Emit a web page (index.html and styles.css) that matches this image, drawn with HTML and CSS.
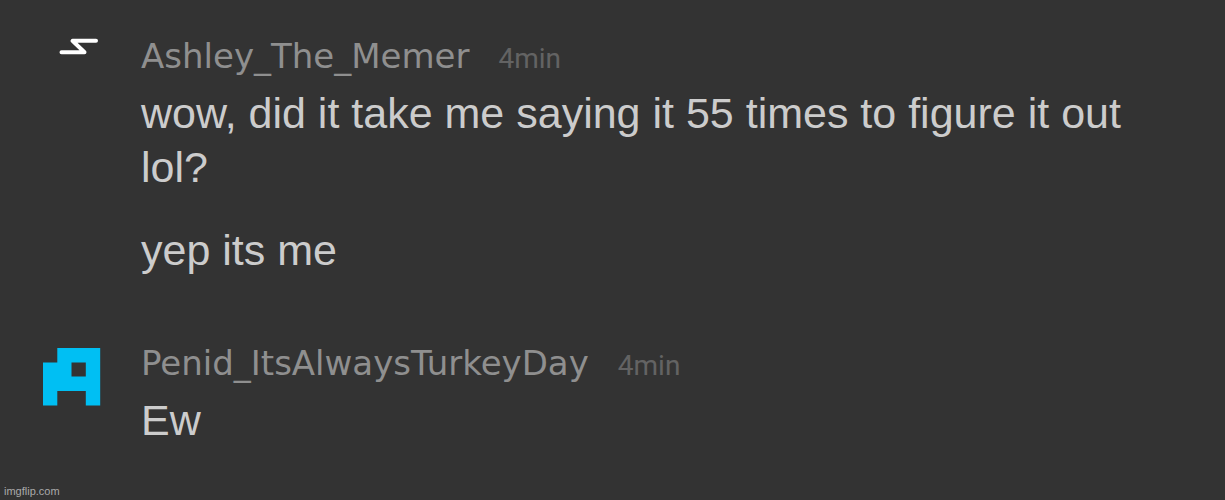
FILE: index.html
```html
<!DOCTYPE html>
<html lang="en">

<head>
    <meta charset="UTF-8">
    <meta name="viewport" content="width=device-width, initial-scale=1.0">
    <title>Chat</title>
    <link rel="stylesheet" href="styles.css">
</head>

<body>
    <main class="chat">
        <article class="message">
            <svg class="avatar" viewBox="0 0 58 66" aria-hidden="true">
                <path d="M18.5 18.2H41.5L29.5 6.8H53" fill="none" stroke="#fff" stroke-width="4" stroke-linecap="round" stroke-linejoin="round"/>
            </svg>
            <div class="content">
                <header class="meta">
                    <span class="name">Ashley_The_Memer</span>
                    <time class="time">4min</time>
                </header>
                <p>wow, did it take me saying it 55 times to figure it out lol?</p>
                <p>yep its me</p>
            </div>
        </article>
        <article class="message">
            <svg class="avatar" viewBox="0 0 58 66" aria-hidden="true">
                <path d="M14.3 7H57.2V64.5H42.8V50H14.3V64.5H0V21.5H14.3ZM28.5 21.5V35.5H42.8V21.5Z" fill="#00bff3" fill-rule="evenodd"/>
            </svg>
            <div class="content">
                <header class="meta">
                    <span class="name">Penid_ItsAlwaysTurkeyDay</span>
                    <time class="time">4min</time>
                </header>
                <p>Ew</p>
            </div>
        </article>
    </main>
    <footer class="credit">imgflip.com</footer>
</body>

</html>
```

FILE: styles.css
```css
body {
    margin: 0;
    min-height: 100vh;
    display: flex;
    flex-direction: column;
    background-color: #333;
    color: #ccc;
    font-family: "Liberation Sans", Arial, sans-serif;
}

.chat {
    flex: 1;
    padding: 34px 43px 0;
}

.message {
    display: flex;
    gap: 40px;
    margin-bottom: 64px;
}

.message:last-child {
    margin-bottom: 0;
}

.avatar {
    flex: none;
    width: 58px;
    height: 66px;
}

.content {
    flex: 1;
}

.meta {
    display: flex;
    align-items: baseline;
    gap: 29px;
    line-height: 44px;
    margin-bottom: 5px;
}

.name {
    color: #8f8f8f;
    font-family: "DejaVu Sans", Verdana, sans-serif;
    font-size: 34px;
}

.time {
    color: #636363;
    font-family: Roboto, sans-serif;
    font-size: 28px;
}

.content p {
    margin: 0 0 29px;
    font-size: 43px;
    line-height: 54px;
}

.content p:last-child {
    margin-bottom: 0;
}

.credit {
    padding: 0 4px 2px;
    color: #aaa;
    font-size: 11px;
    line-height: 14px;
}
```
